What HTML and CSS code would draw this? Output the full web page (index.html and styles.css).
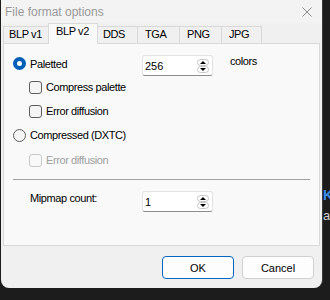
FILE: index.html
```html
<!DOCTYPE html>
<html lang="en">
<head>
    <meta charset="UTF-8">
    <meta name="viewport" content="width=device-width, initial-scale=1.0">
    <title>File format options</title>
    <link rel="stylesheet" href="styles.css">
</head>
<body>

<div class="desk">
    <span class="bg-k">K</span>
    <span class="bg-a">a</span>

    <div class="dialog">
        <div class="titlebar">
            <span class="title">File format options</span>
            <svg class="close" width="10" height="10" viewBox="0 0 10 10">
                <path d="M0.5 0.5L9.5 9.5M9.5 0.5L0.5 9.5" stroke="#8a8a8a" stroke-width="1" fill="none"/>
            </svg>
        </div>

        <div class="tabs">
            <div class="tab t1">BLP v1</div>
            <div class="tab t2 active">BLP v2</div>
            <div class="tab t3">DDS</div>
            <div class="tab t4">TGA</div>
            <div class="tab t5">PNG</div>
            <div class="tab t6">JPG</div>
        </div>

        <div class="panel">
            <div class="row first">
                <label class="opt main">
                    <span class="radio on"></span>Paletted
                </label>
                <div class="spin">
                    <span class="spin-value">256</span>
                    <svg class="arrows" width="12" height="14" viewBox="0 0 12 14">
                        <rect x="0.5" y="0.5" width="11" height="6" rx="3" fill="#fff" stroke="#c4c4c4"/>
                        <rect x="0.5" y="7.5" width="11" height="6" rx="3" fill="#fff" stroke="#c4c4c4"/>
                        <path d="M3 5H9L6 2Z" fill="#000"/>
                        <path d="M3 9H9L6 12Z" fill="#000"/>
                    </svg>
                </div>
                <span class="unit">colors</span>
            </div>

            <label class="row opt sub">
                <span class="check"></span>Compress palette
            </label>
            <label class="row opt sub">
                <span class="check"></span>Error diffusion
            </label>
            <label class="row opt">
                <span class="radio"></span>Compressed (DXTC)
            </label>
            <label class="row opt sub disabled">
                <span class="check"></span>Error diffusion
            </label>

            <div class="sep"></div>

            <div class="row mip">
                <span class="mip-label">Mipmap count:</span>
                <div class="spin">
                    <span class="spin-value">1</span>
                    <svg class="arrows" width="12" height="14" viewBox="0 0 12 14">
                        <rect x="0.5" y="0.5" width="11" height="6" rx="3" fill="#fff" stroke="#c4c4c4"/>
                        <rect x="0.5" y="7.5" width="11" height="6" rx="3" fill="#fff" stroke="#c4c4c4"/>
                        <path d="M3 5H9L6 2Z" fill="#000"/>
                        <path d="M3 9H9L6 12Z" fill="#000"/>
                    </svg>
                </div>
            </div>
        </div>

        <div class="buttons">
            <button class="btn default">OK</button>
            <button class="btn">Cancel</button>
        </div>
    </div>
</div>

</body>
</html>
```

FILE: styles.css
```css
body {
    margin: 0;
    background-color: #1c1c1c;
    font-family: "Liberation Sans", Arial, sans-serif;
    font-size: 11px;
    letter-spacing: -0.4px;
    color: #000;
}
.desk {
    position: relative;
    width: 330px;
    height: 300px;
    overflow: hidden;
}
.bg-k {
    position: absolute;
    left: 323px;
    top: 187px;
    color: #3b8eea;
    font-size: 14px;
    font-weight: bold;
}
.bg-a {
    position: absolute;
    left: 323px;
    top: 208px;
    color: #cfcfcf;
    font-size: 13px;
}
.dialog {
    margin-left: 1px;
    width: 321px;
    height: 288px;
    background-color: #f0f0f0;
    border-radius: 0 0 8px 8px;
    display: flex;
    flex-direction: column;
    box-shadow: 1px 0 0 #3a3a3a;
}
.titlebar {
    height: 23px;
    display: flex;
    align-items: center;
    padding-left: 4px;
    padding-right: 10px;
    background-color: #f3f3f3;
}
.title {
    font-size: 12px;
    letter-spacing: 0;
    color: #999;
}
.close {
    margin-left: auto;
}
.tabs {
    height: 20px;
    display: flex;
    align-items: flex-end;
    padding-left: 2px;
}
.tab {
    box-sizing: border-box;
    height: 17px;
    line-height: 15px;
    padding-left: 7px;
    border: 1px solid #d9d9d9;
    border-bottom: none;
    background-color: #f0f0f0;
    white-space: nowrap;
}
.tab + .tab {
    margin-left: -1px;
}
.t1 { width: 48px; padding-left: 5px; }
.t2 { width: 46px; }
.t3 { width: 43px; }
.t4 { width: 43px; }
.t5 { width: 43px; }
.t6 { width: 41px; }
.tab.active {
    position: relative;
    z-index: 1;
    width: 50px;
    height: 21px;
    line-height: 14px;
    margin-left: -3px;
    margin-right: -2px;
    margin-bottom: -1px;
    background-color: #f9f9f9;
}
.panel {
    box-sizing: border-box;
    height: 203px;
    margin: 0 2px 0 2px;
    padding: 10px 9px 0 9px;
    background-color: #f9f9f9;
    border: 1px solid #d9d9d9;
}
.row {
    display: flex;
}
.first {
    height: 21px;
    align-items: flex-start;
}
.opt {
    height: 24px;
    align-items: center;
    gap: 4px;
}
.main {
    display: flex;
    width: 129px;
    height: 13px;
    margin-top: 3px;
}
.sub {
    padding-left: 16px;
}
.disabled {
    margin-top: 1px;
    color: #a0a0a0;
}
.radio {
    box-sizing: border-box;
    width: 13px;
    height: 13px;
    border-radius: 50%;
    border: 1px solid #5d5d5d;
    background-color: #f5f5f5;
}
.radio.on {
    border: 4px solid #005fb8;
    background-color: #fff;
}
.check {
    box-sizing: border-box;
    width: 13px;
    height: 13px;
    border-radius: 3px;
    border: 1px solid #5d5d5d;
    background-color: #f5f5f5;
}
.disabled .check {
    border-color: #c8c8c8;
    background-color: #f9f9f9;
}
.spin {
    box-sizing: border-box;
    width: 71px;
    height: 21px;
    margin-top: 1px;
    display: flex;
    align-items: center;
    padding: 0 3px 0 2px;
    background-color: #fff;
    border: 1px solid #e3e3e3;
    border-bottom-color: #8d8d8d;
    border-radius: 3px;
}
.mip .spin {
    margin-top: 0;
}
.spin-value {
    letter-spacing: 0;
}
.arrows {
    margin-left: auto;
}
.unit {
    margin-left: 17px;
    margin-top: 1px;
}
.sep {
    height: 1px;
    margin-top: 7px;
    background-color: #a0a0a0;
}
.mip {
    margin-top: 11px;
    align-items: flex-start;
}
.mip-label {
    box-sizing: border-box;
    width: 129px;
    padding-left: 17px;
    margin-top: 1px;
}
.buttons {
    display: flex;
    justify-content: flex-end;
    gap: 8px;
    margin-top: 10px;
    padding-right: 8px;
}
.btn {
    width: 72px;
    height: 23px;
    font-family: "Liberation Sans", Arial, sans-serif;
    font-size: 11px;
    color: #000;
    background-color: #fdfdfd;
    border: 1px solid #d0d0d0;
    border-radius: 4px;
    padding: 0;
}
.btn.default {
    border-color: #0067c0;
}
```
